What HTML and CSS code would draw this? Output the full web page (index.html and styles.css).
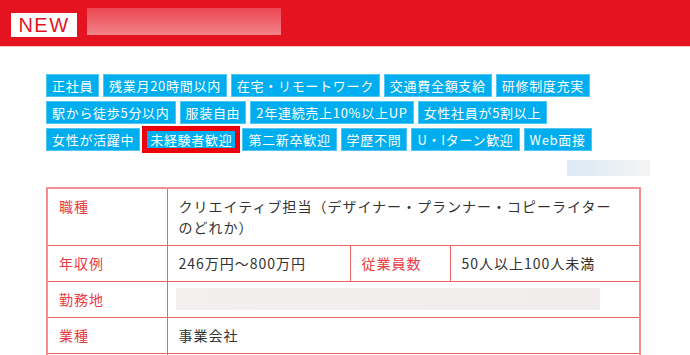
FILE: index.html
```html
<!DOCTYPE html>
<html lang="ja">
<head>
    <meta charset="UTF-8">
    <meta name="viewport" content="width=device-width, initial-scale=1.0">
    <title>求人情報</title>
    <link rel="stylesheet" href="styles.css">
</head>
<body>
    <div class="header">
        <span class="new-badge">NEW</span>
        <span class="header-title"></span>
    </div>

    <div class="content">
        <ul class="tags">
            <li class="tag">正社員</li>
            <li class="tag">残業月20時間以内</li>
            <li class="tag">在宅・リモートワーク</li>
            <li class="tag">交通費全額支給</li>
            <li class="tag">研修制度充実</li>
            <li class="tag">駅から徒歩5分以内</li>
            <li class="tag">服装自由</li>
            <li class="tag">2年連続売上10%以上UP</li>
            <li class="tag">女性社員が5割以上</li>
            <li class="tag">女性が活躍中</li>
            <li class="tag tag-marked">未経験者歓迎</li>
            <li class="tag">第二新卒歓迎</li>
            <li class="tag">学歴不問</li>
            <li class="tag">U・Iターン歓迎</li>
            <li class="tag">Web面接</li>
        </ul>

        <div class="meta">
            <span class="date"></span>
        </div>

        <table class="info">
            <colgroup>
                <col class="col-label">
                <col class="col-value">
                <col class="col-label2">
                <col>
            </colgroup>
            <tr>
                <th>職種</th>
                <td colspan="3">クリエイティブ担当（デザイナー・プランナー・コピーライターのどれか）</td>
            </tr>
            <tr>
                <th>年収例</th>
                <td>246万円～800万円</td>
                <th>従業員数</th>
                <td>50人以上100人未満</td>
            </tr>
            <tr>
                <th>勤務地</th>
                <td colspan="3"><span class="hidden-text"></span></td>
            </tr>
            <tr>
                <th>業種</th>
                <td colspan="3">事業会社</td>
            </tr>
            <tr class="row-empty">
                <th></th>
                <td colspan="3"></td>
            </tr>
        </table>
    </div>
</body>
</html>
```

FILE: styles.css
```css
body {
    font-family: "Noto Sans CJK JP", "Noto Sans", sans-serif;
    margin: 0;
    padding: 0;
    color: #333;
    background: #fff;
}
.header {
    display: flex;
    align-items: flex-start;
    gap: 10px;
    height: 46px;
    padding-left: 11px;
    background-color: #e5131f;
    border-bottom: 1px solid #f6c2c5;
}
.new-badge {
    margin-top: 13px;
    width: 66px;
    height: 24px;
    line-height: 24px;
    text-align: center;
    background: #fff;
    color: #e5131f;
    font-family: "Liberation Sans", Arial, sans-serif;
    font-size: 20px;
    letter-spacing: 1.5px;
}
.header-title {
    margin-top: 8px;
    width: 194px;
    height: 27px;
    background: linear-gradient(to bottom, rgba(255, 255, 255, 0.22), rgba(255, 255, 255, 0.48));
}
.content {
    width: 595px;
    margin: 27px 0 0 46px;
}
.tags {
    display: flex;
    flex-wrap: wrap;
    gap: 4px;
    margin: 0;
    padding: 0;
    list-style: none;
}
.tag {
    height: 21px;
    line-height: 21px;
    padding: 0 5px;
    background-color: #00aeef;
    border: 1px solid #52c6f3;
    color: #fff;
    font-size: 13px;
    letter-spacing: 0.7px;
}
.tag-marked {
    outline: 5px solid #ee0008;
    outline-offset: -3px;
}
.meta {
    display: flex;
    justify-content: flex-end;
    margin: 9px -9px 0 0;
}
.date {
    width: 83px;
    height: 16px;
    background: linear-gradient(to right, #dbe9f6, #f4f4f4);
}
.info {
    width: 595px;
    margin-top: 11px;
    border-collapse: collapse;
    table-layout: fixed;
    border: 2px solid #f48d8f;
    font-size: 14px;
    letter-spacing: 1px;
    line-height: 21px;
}
.col-label {
    width: 120px;
}
.col-value {
    width: 183px;
}
.col-label2 {
    width: 100px;
}
.info th,
.info td {
    border: 1px solid #f06468;
    padding: 7px 20px 7px 11px;
    text-align: left;
    vertical-align: top;
}
.info th {
    color: #ea3a42;
    font-weight: normal;
}
.row-empty th,
.row-empty td {
    height: 21px;
}
.hidden-text {
    display: block;
    width: 424px;
    height: 22px;
    margin: -1px 0 -2px -3px;
    background: linear-gradient(to right, #f4efef, #f1eded);
}
```
